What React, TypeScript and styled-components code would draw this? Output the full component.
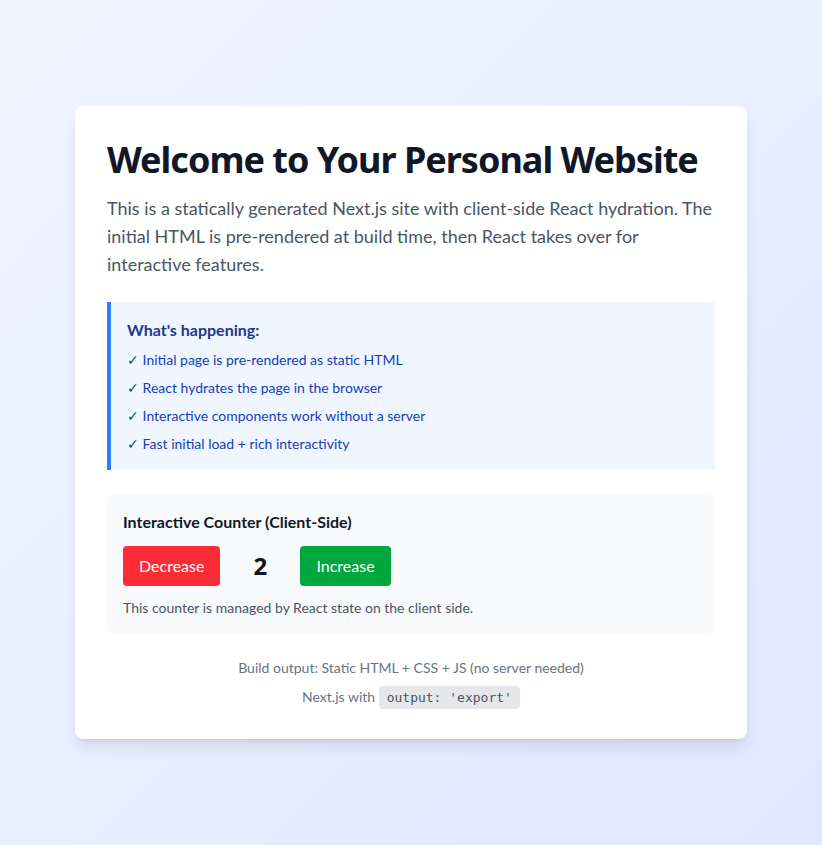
import React, { useState } from "react";
import styled, { createGlobalStyle } from "styled-components";

const Global = createGlobalStyle`
  * { box-sizing: border-box; }
  html, body { margin: 0; padding: 0; }
  body {
    font-family: Lato, "Noto Sans", sans-serif;
    -webkit-font-smoothing: antialiased;
  }
`;

const Page = styled.main`
  min-height: 100vh;
  background: linear-gradient(to bottom right, #eff6ff, #e0e7ff);
  display: flex;
  align-items: center;
  justify-content: center;
  padding: 16px;
`;

const Card = styled.div`
  width: 100%;
  max-width: 672px;
  background: #ffffff;
  border-radius: 8px;
  box-shadow: 0 10px 15px -3px rgba(0, 0, 0, 0.1), 0 4px 6px -4px rgba(0, 0, 0, 0.1);
  padding: 32px;
`;

const Title = styled.h1`
  margin: 0 0 12px;
  font-family: "Noto Sans", Lato, sans-serif;
  font-size: 36px;
  line-height: 44px;
  font-weight: 700;
  letter-spacing: -1px;
  white-space: nowrap;
  color: #101828;
`;

const Lead = styled.p`
  margin: 0 0 24px;
  font-size: 18px;
  line-height: 28px;
  color: #4a5565;
`;

const InfoBox = styled.section`
  background: #eff6ff;
  border-left: 4px solid #2b7fff;
  padding: 16px;
  margin-bottom: 24px;
`;

const InfoTitle = styled.h2`
  margin: 0 0 8px;
  font-size: 16px;
  line-height: 24px;
  font-weight: 700;
  color: #1c398e;
`;

const List = styled.ul`
  list-style: none;
  margin: 0;
  padding: 0;
  display: flex;
  flex-direction: column;
  gap: 8px;
`;

const Item = styled.li`
  font-size: 14px;
  line-height: 20px;
  color: #193cb8;
`;

const CounterBox = styled.section`
  background: #f9fafb;
  border-radius: 8px;
  padding: 16px;
  margin-bottom: 24px;
`;

const CounterTitle = styled.h3`
  margin: 0 0 12px;
  font-size: 16px;
  line-height: 24px;
  font-weight: 700;
  color: #101828;
`;

const Row = styled.div`
  display: flex;
  align-items: center;
  gap: 16px;
`;

const Button = styled.button<{ $tone: "red" | "green" }>`
  border: none;
  border-radius: 4px;
  padding: 8px 16px;
  font-family: inherit;
  font-size: 16px;
  line-height: 24px;
  color: #ffffff;
  cursor: pointer;
  background: ${(p) => (p.$tone === "red" ? "#fb2c36" : "#00a63e")};
`;

const Count = styled.span`
  width: 48px;
  text-align: center;
  font-family: "Noto Sans", Lato, sans-serif;
  font-size: 24px;
  line-height: 32px;
  font-weight: 700;
  color: #101828;
`;

const Note = styled.p`
  margin: 12px 0 0;
  font-size: 14px;
  line-height: 20px;
  color: #4a5565;
`;

const Footer = styled.footer`
  text-align: center;
  font-size: 14px;
  line-height: 20px;
  color: #6a7282;
`;

const FootLine = styled.p<{ $gap?: boolean }>`
  margin: ${(p) => (p.$gap ? "9px 0 0" : "0")};
`;

const Code = styled.code`
  background: #e5e7eb;
  border-radius: 4px;
  padding: 4px 8px;
  font-family: "DejaVu Sans Mono", "Liberation Mono", monospace;
  font-size: 13px;
  line-height: 16px;
  color: #4a5565;
`;

export default function App() {
  const [count, setCount] = useState(2);
  return (
    <>
      <Global />
      <Page>
        <Card>
          <Title>Welcome to Your Personal Website</Title>
          <Lead>
            This is a statically generated Next.js site with client-side React hydration. The
            initial HTML is pre-rendered at build time, then React takes over for interactive
            features.
          </Lead>
          <InfoBox>
            <InfoTitle>What's happening:</InfoTitle>
            <List>
              <Item>✓ Initial page is pre-rendered as static HTML</Item>
              <Item>✓ React hydrates the page in the browser</Item>
              <Item>✓ Interactive components work without a server</Item>
              <Item>✓ Fast initial load + rich interactivity</Item>
            </List>
          </InfoBox>
          <CounterBox>
            <CounterTitle>Interactive Counter (Client-Side)</CounterTitle>
            <Row>
              <Button $tone="red" onClick={() => setCount((c) => c - 1)}>
                Decrease
              </Button>
              <Count>{count}</Count>
              <Button $tone="green" onClick={() => setCount((c) => c + 1)}>
                Increase
              </Button>
            </Row>
            <Note>This counter is managed by React state on the client side.</Note>
          </CounterBox>
          <Footer>
            <FootLine>Build output: Static HTML + CSS + JS (no server needed)</FootLine>
            <FootLine $gap>
              Next.js with <Code>output: 'export'</Code>
            </FootLine>
          </Footer>
        </Card>
      </Page>
    </>
  );
}
